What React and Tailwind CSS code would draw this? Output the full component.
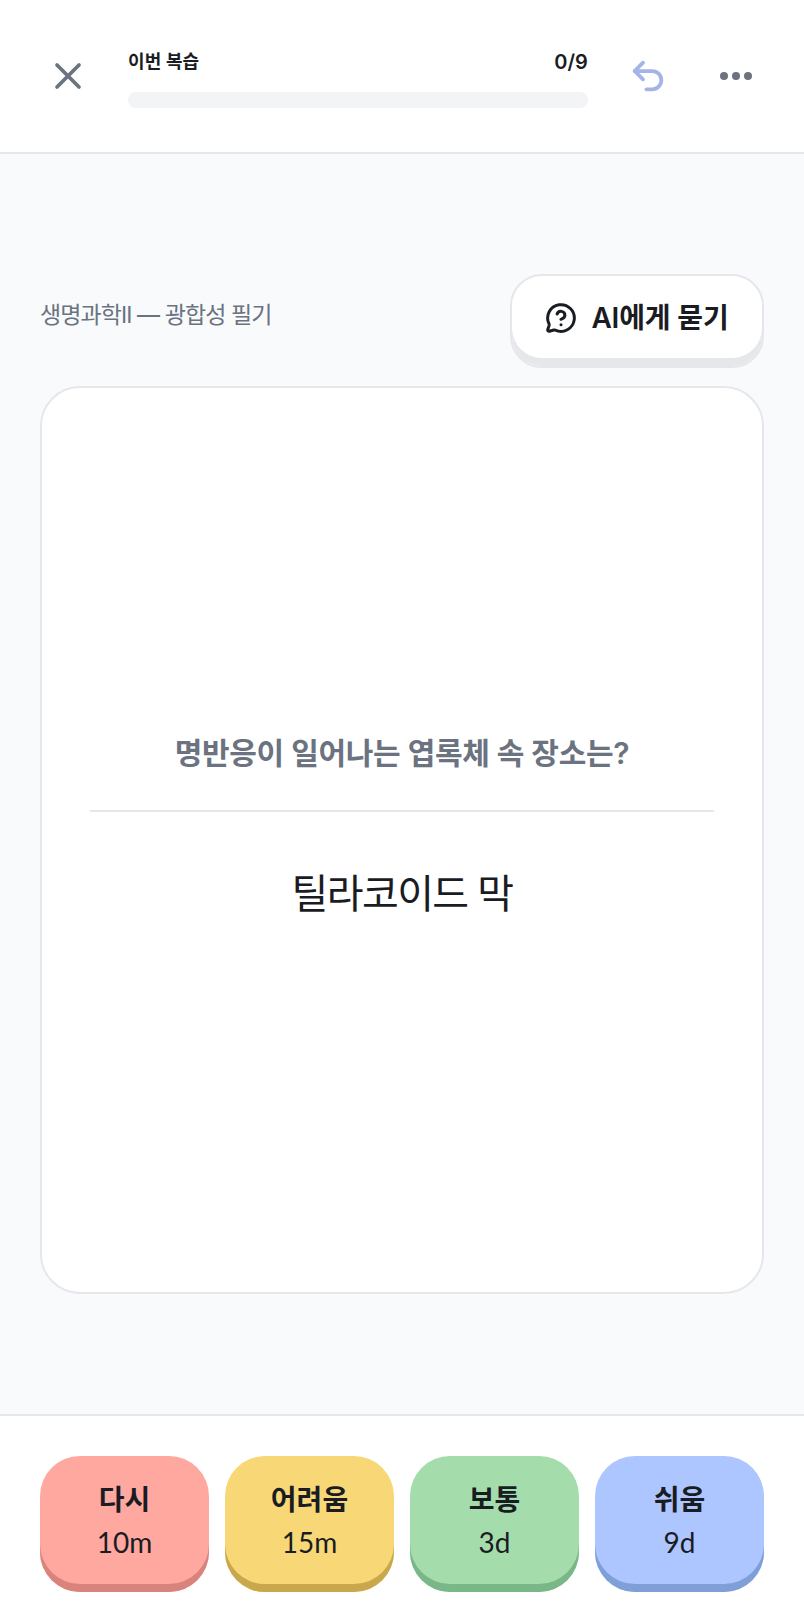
import React from "react";
import { X, Undo2, MessageCircleQuestion } from "lucide-react";

const kr = "font-['Inter','Noto_Sans_CJK_KR',sans-serif]";
const btns = [
  { l: "다시", t: "10m", c: "bg-[#ffa8a0] shadow-[inset_0_-8px_0_0_#d8837c]" },
  { l: "어려움", t: "15m", c: "bg-[#f8d776] shadow-[inset_0_-8px_0_0_#c9a74c]" },
  { l: "보통", t: "3d", c: "bg-[#a5dcac] shadow-[inset_0_-8px_0_0_#7ab788]" },
  { l: "쉬움", t: "9d", c: "bg-[#adc6ff] shadow-[inset_0_-8px_0_0_#7f9fd6]" },
];

export default function App() {
  return (
    <div className={`${kr} flex h-[1624px] w-[804px] flex-col bg-[#f8fafc] text-[#1a1c23]`}>
      <header className="flex h-[154px] items-center border-b-2 border-[#e5e7eb] bg-white pl-[46px] pr-[48px]">
        <X className="h-[44px] w-[44px] shrink-0 text-[#6b7280]" strokeWidth={2} />
        <div className="ml-[38px] mt-[4px] w-[460px] shrink-0">
          <div className="flex items-center justify-between text-[18px] font-semibold leading-[28px] tracking-[0.005em]">
            <span>이번 복습</span>
            <span className="text-[20px]">0/9</span>
          </div>
          <div className="mt-[16px] h-[16px] rounded-full bg-[#f3f4f6]" />
        </div>
        <Undo2 className="ml-[40px] h-[40px] w-[40px] shrink-0 text-[#a5b4e8]" strokeWidth={2.25} />
        <svg viewBox="0 0 40 40" className="ml-[48px] h-[40px] w-[40px] shrink-0 text-[#6b7280]" fill="currentColor">
          <circle cx="8" cy="20" r="4" />
          <circle cx="20" cy="20" r="4" />
          <circle cx="32" cy="20" r="4" />
        </svg>
      </header>

      <main className="flex flex-1 flex-col px-[40px] pt-[120px]">
        <div className="flex items-start justify-between">
          <span className="mt-[24px] text-[23px] leading-[34px] tracking-[-0.04em] text-[#6b7280]">생명과학II — 광합성 필기</span>
          <div className="flex h-[94px] w-[254px] items-start justify-center gap-[14px] rounded-[32px] border-2 border-[#e5e7eb] bg-white pt-[20px] shadow-[inset_0_-8px_0_0_#e5e7eb]">
            <MessageCircleQuestion className="mt-[6px] h-[32px] w-[32px] text-[#1a1c23]" strokeWidth={2.25} />
            <span className="text-[28px] font-semibold leading-[44px] tracking-[-0.005em]">AI에게 묻기</span>
          </div>
        </div>
        <div className="mt-[18px] flex h-[908px] flex-col items-center rounded-[40px] border-2 border-[#e5e7eb] bg-white px-[48px] pt-[343px]">
          <div className="text-[30px] font-semibold leading-[44px] tracking-[-0.01em] text-[#6b7280]">명반응이 일어나는 엽록체 속 장소는?</div>
          <div className="mt-[35px] h-[2px] w-full bg-[#e5e7eb]" />
          <div className="mt-[52px] text-[40px] leading-[60px] tracking-[-0.04em]">틸라코이드 막</div>
        </div>
      </main>

      <footer className="grid h-[210px] grid-cols-4 gap-[16px] border-t-2 border-[#e5e7eb] bg-white px-[40px] pt-[40px]">
        {btns.map((b) => (
          <div key={b.l} className={`flex h-[136px] flex-col items-center rounded-[40px] pt-[24px] ${b.c}`}>
            <span className="text-[28px] font-semibold leading-[40px]">{b.l}</span>
            <span className="mt-[2px] font-['Lato',sans-serif] text-[28px] leading-[40px]">{b.t}</span>
          </div>
        ))}
      </footer>
    </div>
  );
}
